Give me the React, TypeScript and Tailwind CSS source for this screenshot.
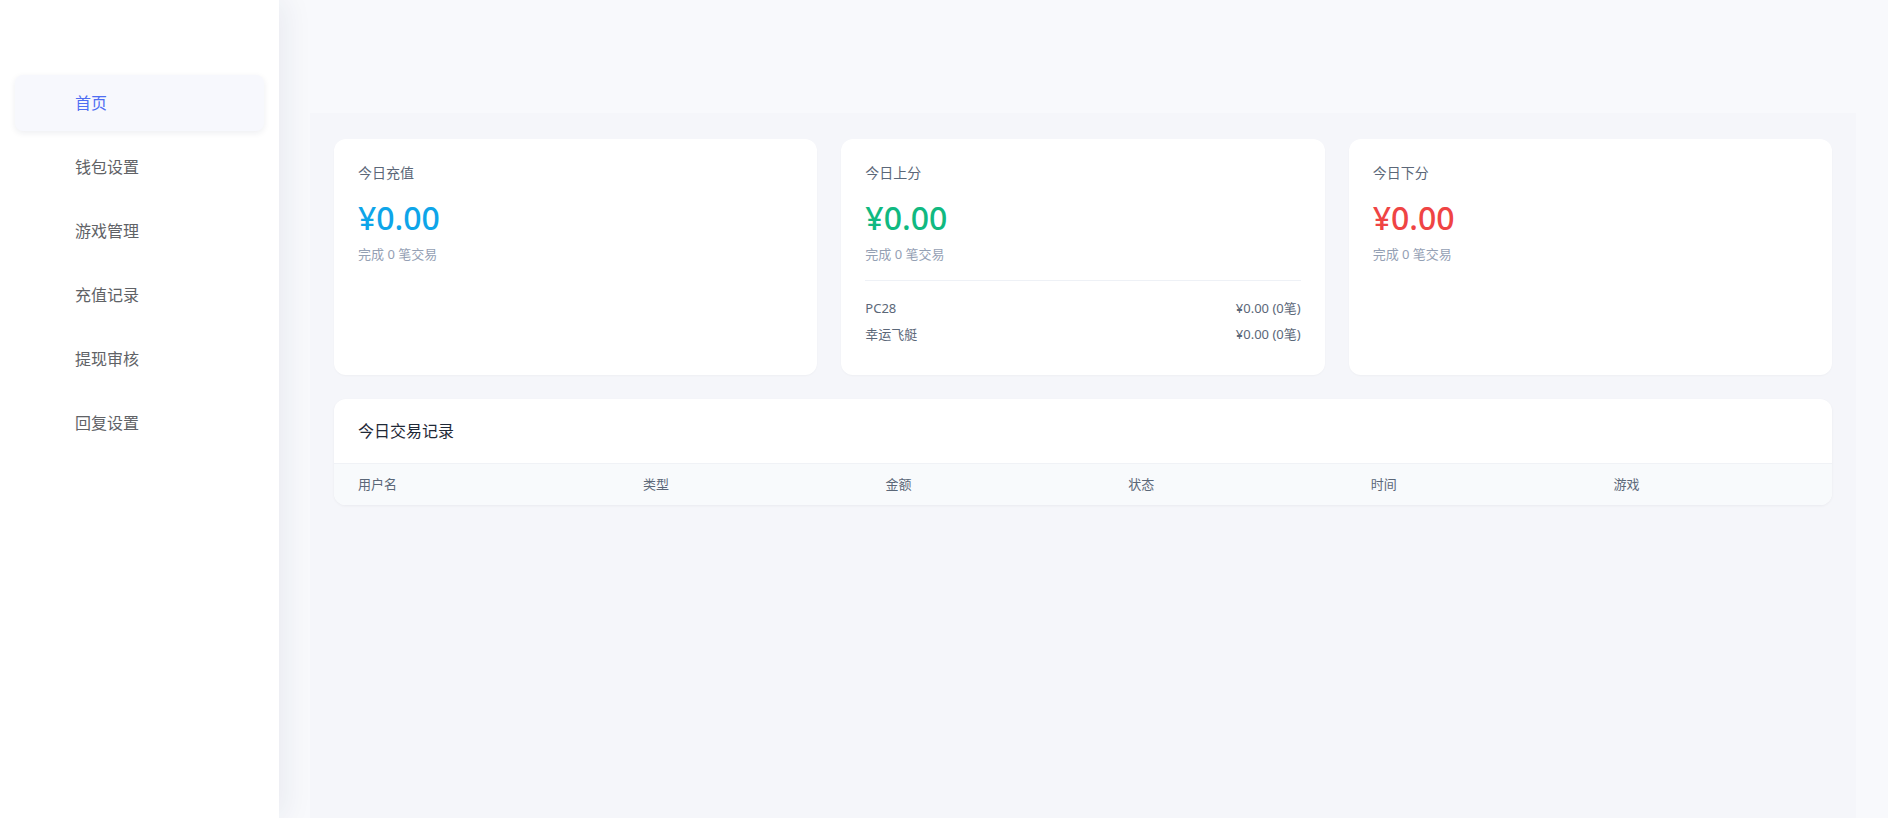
const menu = ["首页", "钱包设置", "游戏管理", "充值记录", "提现审核", "回复设置"];

const columns = ["用户名", "类型", "金额", "状态", "时间", "游戏"];

function StatCard({
  label,
  color,
  games,
}: {
  label: string;
  color: string;
  games?: { name: string; value: string }[];
}) {
  return (
    <div className="bg-white rounded-xl px-6 pt-6 pb-7 shadow-[0_1px_2px_rgba(15,23,42,0.03)]">
      <div className="text-[14px] leading-5 text-[#5b6778]">{label}</div>
      <div className={`mt-[15px] text-[32px] leading-[40px] font-medium ${color}`}>¥0.00</div>
      <div className="mt-1.5 text-[13px] leading-5 text-[#94a0b4]">完成 0 笔交易</div>
      {games && (
        <div className="mt-4 border-t border-[#eef1f6] pt-[14px]">
          {games.map((g) => (
            <div key={g.name} className="flex justify-between text-[13px] leading-[26px] text-[#5b6778]">
              <span>{g.name}</span>
              <span>{g.value}</span>
            </div>
          ))}
        </div>
      )}
    </div>
  );
}

export default function App() {
  return (
    <div
      className="flex h-screen w-full bg-[#f8f9fc] overflow-hidden"
      style={{ fontFamily: '"Noto Sans", "Noto Sans CJK SC", sans-serif' }}
    >
      <aside className="w-[279px] shrink-0 bg-white relative z-10 shadow-[6px_0_28px_rgba(30,40,80,0.07)] pt-[75px] px-[15px]">
        <nav className="flex flex-col gap-2">
          {menu.map((item, i) => (
            <div
              key={item}
              className={
                i === 0
                  ? "h-14 flex items-center pl-[60px] rounded-lg bg-[#f7f8fd] text-[#4f6ef2] text-[16px] shadow-[0_2px_6px_rgba(30,40,80,0.08)]"
                  : "h-14 flex items-center pl-[60px] rounded-lg text-[#606266] text-[16px]"
              }
            >
              {item}
            </div>
          ))}
        </nav>
      </aside>

      <main className="flex-1 flex flex-col pt-[113px] pl-[31px] pr-[32px]">
        <div className="flex-1 bg-[#f5f6fa] px-6 pt-[26px]">
          <div className="grid grid-cols-3 gap-6">
            <StatCard label="今日充值" color="text-[#0ea5e9]" />
            <StatCard
              label="今日上分"
              color="text-[#10b981]"
              games={[
                { name: "PC28", value: "¥0.00 (0笔)" },
                { name: "幸运飞艇", value: "¥0.00 (0笔)" },
              ]}
            />
            <StatCard label="今日下分" color="text-[#ef4444]" />
          </div>

          <div className="mt-6 bg-white rounded-xl overflow-hidden shadow-[0_1px_3px_rgba(15,23,42,0.05)]">
            <div className="px-6 py-5 text-[16px] leading-6 text-[#1f2937]">今日交易记录</div>
            <div className="grid grid-cols-[285px_1fr_1fr_1fr_1fr_1fr] h-[42px] items-center bg-[#f8fafc] border-t border-[#f0f2f6]">
              {columns.map((c) => (
                <div key={c} className="px-6 text-[13px] text-[#5b6778]">
                  {c}
                </div>
              ))}
            </div>
          </div>
        </div>
      </main>
    </div>
  );
}
